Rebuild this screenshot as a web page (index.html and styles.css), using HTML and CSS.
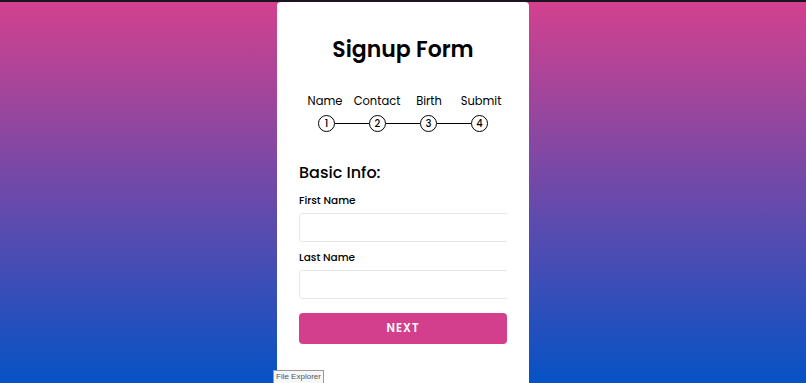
FILE: index.html
```html
<!DOCTYPE html>
<html>
<head>
<meta charset="utf-8">
<link rel="stylesheet" href="styles.css">
</head>
<body>
<div class="topbar"></div>
<div class="card">
  <h1 class="title">Signup Form</h1>
  <div class="steps">
    <div class="labels">
      <span>Name</span><span>Contact</span><span>Birth</span><span>Submit</span>
    </div>
    <div class="circles">
      <span class="circle">1</span><span class="line"></span>
      <span class="circle">2</span><span class="line"></span>
      <span class="circle">3</span><span class="line"></span>
      <span class="circle">4</span>
    </div>
  </div>
  <div class="page">
    <div class="heading">Basic Info:</div>
    <div class="field">
      <div class="label">First Name</div>
      <input class="input" type="text">
    </div>
    <div class="field">
      <div class="label">Last Name</div>
      <input class="input" type="text">
    </div>
  </div>
  <button class="next">NEXT</button>
</div>
<div class="tooltip">File Explorer</div>
</body>
</html>
```
FILE: styles.css
```css
html, body {
  margin: 0;
  height: 383px;
  overflow: hidden;
}
body {
  background: linear-gradient(to bottom, #d4418e 0%, #0652c5 100%);
  font-family: "Poppins", "Inter", "Noto Sans", sans-serif;
  color: #000;
  position: relative;
}
.topbar {
  height: 2px;
  background: #1a1420;
}
.card {
  width: 208px;
  margin: 0 auto;
  background: #fff;
  border-radius: 4px;
  padding: 28px 22px 60px;
  height: 400px;
  box-sizing: content-box;
}
.title {
  margin: 0;
  text-align: center;
  font-size: 22px;
  font-weight: 600;
  line-height: 40px;
}
.steps {
  margin-top: 22px;
}
.labels {
  display: flex;
}
.labels span {
  width: 52px;
  text-align: center;
  font-size: 11.5px;
  font-weight: 400;
  line-height: 18px;
}
.circles {
  display: flex;
  align-items: center;
  justify-content: center;
  margin-top: 5px;
}
.circle {
  width: 15px;
  height: 15px;
  border: 1.5px solid #000;
  border-radius: 50%;
  font-size: 10px;
  font-weight: 500;
  line-height: 15px;
  text-align: center;
}
.line {
  width: 34px;
  height: 1.5px;
  background: #000;
}
.page {
  margin-top: 27px;
  overflow: hidden;
}
.heading {
  font-size: 16px;
  font-weight: 500;
  line-height: 28px;
}
.field {
  margin-top: 5px;
}
.field + .field {
  margin-top: 7px;
}
.label {
  font-size: 10.5px;
  font-weight: 500;
  line-height: 18px;
}
.input {
  display: block;
  box-sizing: border-box;
  width: 240px;
  height: 29px;
  margin: 3px 0 0;
  border: 1px solid #e8e8e8;
  border-radius: 3px;
  background: #fff;
  outline: none;
}
.next {
  display: block;
  width: 208px;
  height: 31px;
  margin-top: 14px;
  border: none;
  border-radius: 4px;
  background: #d43f8d;
  color: #fff;
  font-family: "Poppins", "Inter", "Noto Sans", sans-serif;
  font-size: 11.5px;
  font-weight: 600;
  letter-spacing: 1px;
}
.tooltip {
  position: absolute;
  left: 273px;
  top: 370px;
  padding: 0 2px;
  height: 12px;
  line-height: 12px;
  font-family: "Liberation Sans", sans-serif;
  font-size: 8px;
  color: #555;
  background: #f7f7f7;
  border: 1px solid #999;
}
```
